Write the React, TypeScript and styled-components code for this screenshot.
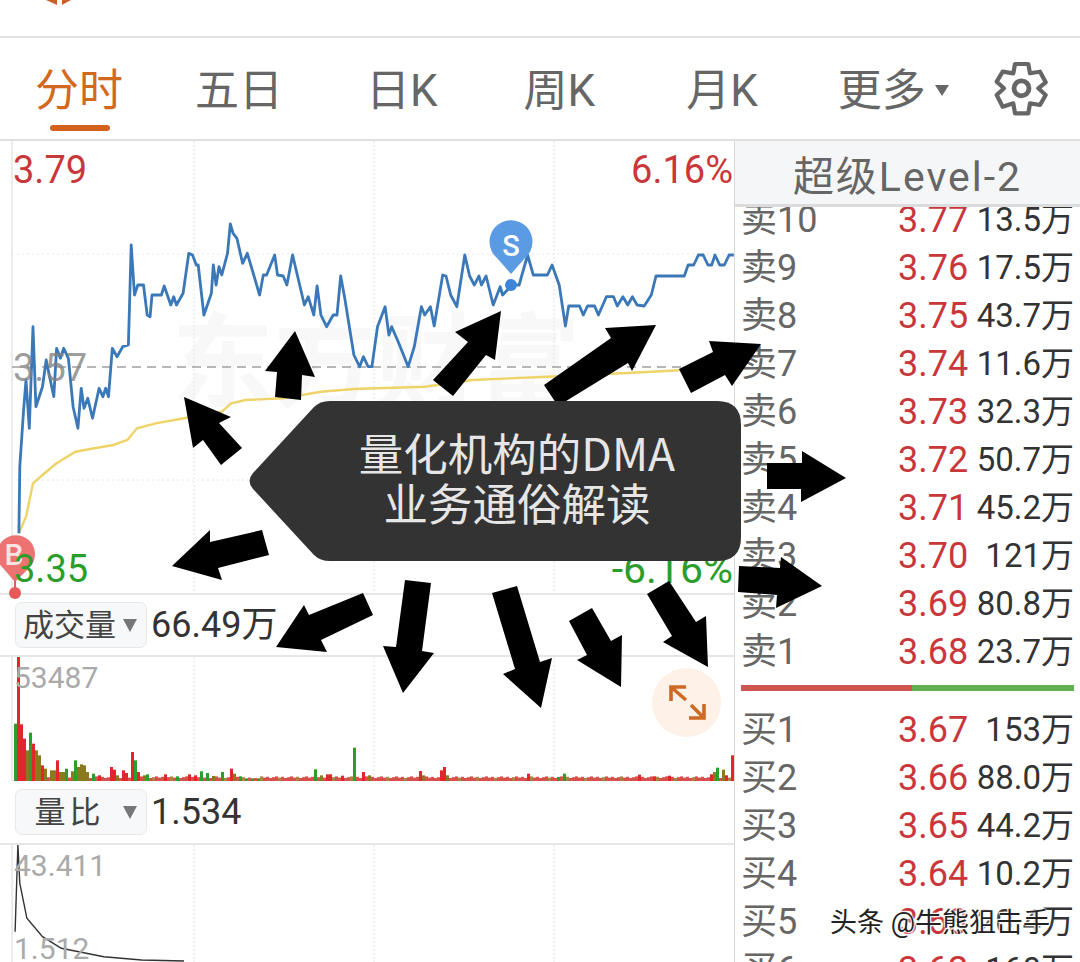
import React from 'react'
import styled, { createGlobalStyle } from 'styled-components'

const FONT = `Roboto, "Noto Sans CJK SC", sans-serif`

const GlobalStyle = createGlobalStyle`
	html, body {
		margin: 0;
		padding: 0;
		background: #fff;
	}
	body {
		width: 1080px;
		height: 962px;
		overflow: hidden;
		font-family: ${FONT};
	}
`

const Page = styled.div`
	position: relative;
	width: 1080px;
	height: 962px;
	overflow: hidden;
	background: #fff;
`

const TopStrip = styled.div`
	height: 36px;
	border-bottom: 2px solid #e2e2e2;

	svg {
		display: block;
	}
`

const TabBar = styled.div`
	display: flex;
	align-items: center;
	height: 101px;
	padding-left: 35px;
	border-bottom: 2px solid #dfdfdf;
`

const Tab = styled.div<{ $gap: number; $active?: boolean }>`
	position: relative;
	display: flex;
	align-items: center;
	margin-left: ${p => p.$gap}px;
	padding-top: 4px;
	font-size: 44px;
	line-height: 50px;
	white-space: nowrap;
	color: ${p => (p.$active ? '#d2691e' : '#666')};

	${p =>
		p.$active &&
		`&::after {
			content: '';
			position: absolute;
			left: 15px;
			right: 13px;
			bottom: -15px;
			height: 6px;
			border-radius: 3px;
			background: #d4621a;
		}`}
`

const TabCaret = styled.span`
	width: 0;
	height: 0;
	margin-left: 9px;
	border-left: 7px solid transparent;
	border-right: 7px solid transparent;
	border-top: 11px solid #666;
`

const GearSlot = styled.div`
	display: flex;
	margin: 3px 0 0 31px;
`

const Body = styled.div`
	display: flex;
	height: 823px;
`

const LeftColumn = styled.div`
	width: 734px;
	flex-shrink: 0;
	border-right: 1px solid #d8d8d8;
`

const ChartBox = styled.div<{ $h: number; $line?: boolean }>`
	position: relative;
	height: ${p => p.$h}px;
	${p => p.$line && 'border-bottom: 2px solid #e6e6e6;'}

	svg {
		position: relative;
		display: block;
		overflow: visible;
	}
`

const ChartLabel = styled.span<{ $top: number; $left?: number; $right?: number; $color: string; $size?: number }>`
	position: absolute;
	top: ${p => p.$top}px;
	${p => (p.$left !== undefined ? `left: ${p.$left}px;` : '')}
	${p => (p.$right !== undefined ? `right: ${p.$right}px;` : '')}
	font-size: ${p => p.$size ?? 38}px;
	line-height: 40px;
	color: ${p => p.$color};
`

const Watermark = styled.div`
	position: absolute;
	left: 172px;
	top: 168px;
	font-size: 102px;
	line-height: 110px;
	font-weight: 700;
	white-space: nowrap;
	color: #f8f8f8;
`

const IndicatorRow = styled.div<{ $h: number }>`
	display: flex;
	align-items: center;
	gap: 4px;
	box-sizing: border-box;
	height: ${p => p.$h}px;
	padding-left: 15px;
	border-bottom: 2px solid #e6e6e6;
`

const IndicatorButton = styled.div`
	display: flex;
	align-items: center;
	box-sizing: border-box;
	width: 132px;
	height: 46px;
	padding-right: 9px;
	border: 1px solid #e8e8e8;
	border-radius: 7px;
	background: #f7f8f9;
	color: #444;
`

const ButtonLabel = styled.span<{ $spacing?: number }>`
	flex: 1;
	margin-top: -6px;
	text-align: center;
	font-size: 31px;
	letter-spacing: ${p => p.$spacing ?? 0}px;
`

const ButtonCaret = styled.span`
	width: 0;
	height: 0;
	border-left: 7px solid transparent;
	border-right: 7px solid transparent;
	border-top: 13px solid #777;
`

const IndicatorValue = styled.span`
	font-size: 36px;
	line-height: 46px;
	color: #333;
`

const ExpandBadge = styled.div`
	position: absolute;
	left: 652px;
	top: 11px;
	display: flex;
	align-items: center;
	justify-content: center;
	width: 69px;
	height: 69px;
	border-radius: 50%;
	background: #fdf1e8;
`

const RightColumn = styled.div`
	flex: 1;
	min-width: 0;
	overflow: hidden;
`

const PanelHeader = styled.div`
	position: relative;
	z-index: 1;
	height: 63px;
	display: flex;
	align-items: center;
	justify-content: center;
	border-bottom: 3px solid #dcdcdc;
	background: #f5f6f7;
	font-size: 41px;
	letter-spacing: 2px;
	color: #666;
`

const QuoteList = styled.div`
	margin-top: -11px;
	padding: 0 6px;
`

const QuoteRow = styled.div`
	display: grid;
	grid-template-columns: 157px 1fr auto;
	height: 48px;
	line-height: 48px;
	font-size: 36px;
	white-space: nowrap;
`

const QuoteLabel = styled.span`
	color: #666;
`

const QuotePrice = styled.span`
	color: #c9373b;
	font-size: 36px;
`

const QuoteVolume = styled.span`
	color: #333;
	font-size: 33px;
`

const SpreadBar = styled.div`
	display: flex;
	height: 6px;
	margin: 9px 0 15px;

	&::before {
		content: '';
		width: 171px;
		background: #cf5550;
	}
	&::after {
		content: '';
		flex: 1;
		background: #62b04f;
	}
`

const ArrowLayer = styled.svg`
	position: absolute;
	left: 0;
	top: 0;
	pointer-events: none;
`

const Callout = styled.div`
	position: absolute;
	left: 248px;
	top: 401px;
	width: 493px;
	height: 160px;
	display: flex;
	flex-direction: column;
	align-items: center;
	justify-content: center;
	padding: 0 0 8px 45px;
	box-sizing: border-box;
	background: #333;
	clip-path: path('M5 72 L66 6 Q72 0 82 0 L469 0 Q493 0 493 24 L493 136 Q493 160 469 160 L82 160 Q72 160 66 154 L5 88 Q-2 80 5 72 Z');
	color: #e6e6e6;
	font-family: "Noto Sans CJK SC", sans-serif;
	font-size: 44.5px;
	line-height: 50px;
	font-weight: 400;
`

const SourceMark = styled.div`
	position: absolute;
	left: 830px;
	top: 906px;
	font-size: 27px;
	line-height: 34px;
	white-space: nowrap;
	color: #222;
	text-shadow: 0 0 2px #fff, 0 0 3px #fff, 1px 1px 1px #fff, -1px -1px 1px #fff;
`

const asks: [string, string, string][] = [
	['卖10', '3.77', '13.5万'],
	['卖9', '3.76', '17.5万'],
	['卖8', '3.75', '43.7万'],
	['卖7', '3.74', '11.6万'],
	['卖6', '3.73', '32.3万'],
	['卖5', '3.72', '50.7万'],
	['卖4', '3.71', '45.2万'],
	['卖3', '3.70', '121万'],
	['卖2', '3.69', '80.8万'],
	['卖1', '3.68', '23.7万'],
]

const bids: [string, string, string][] = [
	['买1', '3.67', '153万'],
	['买2', '3.66', '88.0万'],
	['买3', '3.65', '44.2万'],
	['买4', '3.64', '10.2万'],
	['买5', '3.63', '20.4万'],
	['买6', '3.62', '160万'],
]

// traced from the chart, x scaled by 2.119 and y by 3
const priceTrace = [
	[40, 1000], [42, 800], [50, 630], [55, 540], [62, 685], [70, 380], [76, 620], [90, 560], [98, 480], [105, 530], [114, 590],
	[120, 445], [128, 475], [135, 445], [145, 475], [155, 620], [165, 685], [172, 565], [178, 625], [186, 595], [196, 655],
	[210, 565], [218, 590], [224, 565], [230, 590], [238, 445], [248, 470], [260, 440], [272, 435], [278, 135], [285, 285],
	[292, 255], [304, 255], [312, 345], [318, 350], [322, 285], [342, 285], [348, 258], [362, 315], [368, 290], [374, 315],
	[388, 280], [400, 160], [408, 165], [416, 195], [420, 195], [432, 345], [448, 280], [452, 195], [458, 255], [464, 200],
	[470, 225], [482, 160], [488, 72], [494, 100], [502, 115], [514, 190], [524, 160], [550, 285], [558, 225], [565, 225],
	[582, 165], [588, 225], [600, 228], [608, 255], [620, 165], [630, 225], [645, 315], [653, 290], [665, 345], [672, 258],
	[680, 345], [692, 380], [706, 345], [714, 345], [722, 228], [730, 290], [750, 465], [762, 500], [770, 470], [780, 500],
	[788, 500], [800, 380], [816, 320], [824, 405], [830, 380], [845, 430], [865, 500], [878, 440], [893, 320], [900, 345],
	[912, 320], [920, 378], [938, 225], [945, 228], [955, 285], [968, 320], [985, 165], [995, 228], [1005, 255], [1015, 228],
	[1020, 255], [1030, 228], [1045, 315], [1060, 260], [1065, 285], [1085, 255], [1100, 255], [1118, 165], [1130, 225],
	[1160, 225], [1170, 195], [1185, 255], [1198, 378], [1205, 318], [1228, 318], [1236, 345], [1245, 318], [1260, 318],
	[1268, 345], [1285, 290], [1300, 290], [1308, 318], [1320, 290], [1330, 315], [1340, 290], [1350, 315], [1365, 318],
	[1380, 285], [1390, 228], [1398, 228], [1450, 228], [1458, 195], [1470, 195], [1480, 165], [1490, 165], [1500, 195],
	[1508, 195], [1515, 165], [1525, 195], [1535, 195], [1545, 165], [1555, 165],
]

const avgTrace = [
	[40, 1000], [55, 950], [70, 850], [90, 825], [120, 790], [160, 755], [200, 745], [240, 735], [270, 720], [290, 685],
	[330, 670], [390, 655], [470, 635], [490, 610], [520, 600], [600, 595], [680, 575], [750, 567], [900, 560], [1000, 540],
	[1160, 530], [1340, 518], [1450, 510],
]

const ratioTrace = [
	[32, 1025], [38, 765], [42, 880], [57, 985], [90, 1040], [130, 1075], [220, 1100], [300, 1110], [390, 1113],
]

const toPoints = (trace: number[][], baseY: number) =>
	trace.map(([x, y]) => `${(x / 2.119).toFixed(1)},${(baseY + y / 3).toFixed(1)}`).join(' ')

const R = '#e2262c'
const G = '#2c9e2c'
const O = '#8a7a1e'

// [zoomed x, zoomed top, colour]
const volumeSpikes: [number, number, string][] = [
	[32, 400, G], [38, 200, R], [44, 402, R], [50, 445, R], [56, 480, O], [63, 427, G], [68, 460, R], [74, 480, O], [80, 495, O],
	[88, 525, R], [96, 535, O], [104, 540, O], [112, 540, O], [120, 510, R], [128, 545, O], [134, 545, O], [140, 535, G],
	[148, 543, O], [158, 510, G], [164, 530, O], [172, 522, O], [178, 525, O], [184, 545, O], [192, 550, G], [205, 555, R],
	[232, 530, R], [240, 538, R], [248, 555, O], [258, 540, R], [268, 548, R], [278, 485, R], [285, 510, G], [292, 545, R],
	[300, 555, O], [310, 552, G], [348, 552, R], [374, 558, G], [398, 552, R], [408, 555, R], [424, 543, G], [438, 548, G],
	[452, 557, O], [468, 545, G], [487, 535, R], [495, 550, O], [505, 558, G], [520, 564, G], [530, 564, G], [545, 564, G],
	[665, 537, G], [680, 555, O], [688, 552, R], [700, 552, R], [722, 556, R], [747, 472, G], [767, 545, R], [780, 555, O],
	[887, 542, R], [895, 555, O], [930, 540, R], [937, 530, R], [945, 555, O], [1115, 550, R], [1180, 560, G], [1190, 550, G],
	[1350, 553, R], [1385, 558, R], [1415, 556, R], [1505, 552, R], [1512, 545, O], [1520, 532, G], [1528, 538, O], [1536, 555, R],
	[1552, 495, R],
]

const volumeBars = () => {
	const bars: { x: number; h: number; c: string }[] = []
	for (let i = 0; i < 240; i++) {
		bars.push({ x: 14 + i * 3, h: 3 + ((i * 7) % 5) * 0.4, c: i % 6 === 4 ? '#a8843c' : '#d8504c' })
	}
	volumeSpikes.forEach(([z, top, c]) => {
		const i = Math.round((z / 2.119 - 14) / 3)
		if (bars[i]) bars[i] = { x: 14 + i * 3, h: (572 - top) / 3, c }
	})
	return bars
}

// black arrows drawn over the whole screenshot
const arrows = [
	'295,331 315,377 302,375 301,400 275,397 277,372 265,371',
	'501,311 495,360 486,355 453,396 433,380 468,342 455,332',
	'656,325 632,371 628,363 558,406 544,385 611,338 605,328',
	'761,344 732,386 725,375 691,393 679,369 713,352 709,341',
	'184,397 231,417 219,423 242,448 221,465 203,440 193,448',
	'172,566 210,530 210,542 262,530 269,555 218,568 222,580',
	'276,647 304,605 309,615 363,593 373,615 321,640 327,652',
	'405,580 431,583 422,651 434,653 403,693 383,646 396,647',
	'492,593 517,586 540,662 552,658 541,708 503,674 515,669',
	'569,621 592,608 611,641 622,635 621,687 577,660 587,655',
	'647,594 669,581 696,622 706,616 708,667 663,642 672,636',
	'767,463 802,463 802,451 846,478 801,502 801,489 767,489',
	'739,566 780,568 781,557 822,586 776,608 777,595 738,592',
]

const GridLines: React.FC<{ y1: number; y2: number }> = ({ y1, y2 }) => (
	<g stroke="#e2e2e2" strokeWidth="1">
		<line x1="12" y1={y1} x2="12" y2={y2} stroke="#d8d8d8" />
		{[194, 374, 554].map(x => (
			<line key={x} x1={x} y1={y1} x2={x} y2={y2} strokeDasharray="2 2" />
		))}
	</g>
)

const GearIcon: React.FC = () => (
	<svg width="80" height="80" viewBox="0 0 80 80" fill="none" stroke="#666" strokeWidth="4.2" strokeLinejoin="round">
		<path d="M35 14 H48.300 L50 23.300 L60 21.700 L65.700 32.300 L58.300 38.300 L65.700 45 L60 55 L50 53.300 L48.300 63.300 H35 L33.300 53.300 L22.700 56.700 L16.700 45 L24 38.300 L16.700 31.700 L22.700 21.700 L33.300 23.300 Z" />
		<circle cx="41.500" cy="38.300" r="7.500" strokeWidth="4.800" />
	</svg>
)

const PriceChart: React.FC = () => (
	<svg width="734" height="452" viewBox="0 141 734 452">
		<GridLines y1={141} y2={593} />
		<g stroke="#e8e8e8" strokeDasharray="2 3">
			<line x1="12" y1="254" x2="734" y2="254" />
			<line x1="12" y1="480" x2="734" y2="480" />
		</g>
		<line x1="12" y1="367" x2="734" y2="367" stroke="#a0a0a0" strokeWidth="1.5" strokeDasharray="9 6" />
		<polyline points={toPoints(avgTrace, 200)} fill="none" stroke="#eed468" strokeWidth="2.400" />
		<polyline points={toPoints(priceTrace, 200)} fill="none" stroke="#3a78b8" strokeWidth="2.800" strokeLinejoin="round" />
		<circle cx="511" cy="285" r="6" fill="#3d85d8" />
		<path d="M511 274 L497 258 A21.500 21.500 0 1 1 525 258 Z" fill="#5a9be4" />
		<text x="511" y="256" textAnchor="middle" fontSize="29" fontWeight="500" fill="#fff" fontFamily="Roboto, sans-serif">S</text>
		<line x1="15" y1="575" x2="15" y2="592" stroke="#e85a5a" strokeWidth="2" />
		<circle cx="15" cy="593" r="6" fill="#e85a5a" />
		<path d="M15 582 L3 568 A19 19 0 1 1 29 568 Z" fill="#ec6c6c" opacity="0.95" />
		<text x="14" y="565" textAnchor="middle" fontSize="30" fontWeight="500" fill="#fbe3e3" fontFamily="Roboto, sans-serif">B</text>
	</svg>
)

const VolumeChart: React.FC = () => (
	<svg width="734" height="124" viewBox="0 657 734 124">
		<GridLines y1={657} y2={781} />
		{volumeBars().map(b => (
			<rect key={b.x} x={b.x} y={781 - b.h} width="3" height={b.h} fill={b.c} />
		))}
	</svg>
)

const RatioChart: React.FC = () => (
	<svg width="734" height="117" viewBox="0 845 734 117">
		<GridLines y1={845} y2={962} />
		<polyline points={toPoints(ratioTrace, 590)} fill="none" stroke="#333" strokeWidth="1.4" />
	</svg>
)

const Quote: React.FC<{ row: [string, string, string] }> = ({ row }) => (
	<QuoteRow>
		<QuoteLabel>{row[0]}</QuoteLabel>
		<QuotePrice>{row[1]}</QuotePrice>
		<QuoteVolume>{row[2]}</QuoteVolume>
	</QuoteRow>
)

const App: React.FC = () => {
	return (
		<Page>
			<GlobalStyle />
			<TopStrip>
				<svg width="80" height="6" viewBox="0 0 80 6">
					<path d="M46 0 H57 V5 Z M62 0 H71 L62 5 Z" fill="#c8622a" />
				</svg>
			</TopStrip>
			<TabBar>
				<Tab $gap={0} $active>分时</Tab>
				<Tab $gap={72}>五日</Tab>
				<Tab $gap={83}>日K</Tab>
				<Tab $gap={86}>周K</Tab>
				<Tab $gap={91}>月K</Tab>
				<Tab $gap={80}>
					更多
					<TabCaret />
				</Tab>
				<GearSlot>
					<GearIcon />
				</GearSlot>
			</TabBar>
			<Body>
				<LeftColumn>
					<ChartBox $h={452} $line>
						<Watermark>东方财富</Watermark>
						<PriceChart />
						<ChartLabel $top={9} $left={13} $color="#c9373b">3.79</ChartLabel>
						<ChartLabel $top={9} $right={1} $color="#c9373b">6.16%</ChartLabel>
						<ChartLabel $top={207} $left={13} $color="rgba(130,130,130,0.8)">3.57</ChartLabel>
						<ChartLabel $top={408} $left={14} $color="#2a9d2a">3.35</ChartLabel>
						<ChartLabel $top={408} $right={1} $color="#2a9d2a" $size={41}>-6.16%</ChartLabel>
					</ChartBox>
					<IndicatorRow $h={62}>
						<IndicatorButton>
							<ButtonLabel>成交量</ButtonLabel>
							<ButtonCaret />
						</IndicatorButton>
						<IndicatorValue>66.49万</IndicatorValue>
					</IndicatorRow>
					<ChartBox $h={124}>
						<VolumeChart />
						<ChartLabel $top={1} $left={14} $color="#aaa" $size={30}>53487</ChartLabel>
						<ExpandBadge>
							<svg width="36" height="36" viewBox="0 0 36 36" fill="none" stroke="#cf6a25" strokeWidth="3.600">
								<path d="M17 2 H2 V16 M2 2 L17 15" />
								<path d="M20 33 H35 V19 M35 33 L22 20" />
							</svg>
						</ExpandBadge>
					</ChartBox>
					<IndicatorRow $h={64}>
						<IndicatorButton>
							<ButtonLabel $spacing={4}>量比</ButtonLabel>
							<ButtonCaret />
						</IndicatorButton>
						<IndicatorValue>1.534</IndicatorValue>
					</IndicatorRow>
					<ChartBox $h={117}>
						<RatioChart />
						<ChartLabel $top={1} $left={14} $color="#aaa" $size={30}>43.411</ChartLabel>
						<ChartLabel $top={84} $left={14} $color="#aaa" $size={30}>1.512</ChartLabel>
					</ChartBox>
				</LeftColumn>
				<RightColumn>
					<PanelHeader>超级Level-2</PanelHeader>
					<QuoteList>
						{asks.map(row => (
							<Quote key={row[0]} row={row} />
						))}
						<SpreadBar />
						{bids.map(row => (
							<Quote key={row[0]} row={row} />
						))}
					</QuoteList>
				</RightColumn>
			</Body>
			<ArrowLayer width="1080" height="962" viewBox="0 0 1080 962">
				{arrows.map(points => (
					<polygon key={points} points={points} fill="#000" />
				))}
			</ArrowLayer>
			<Callout>
				<div>量化机构的DMA</div>
				<div>业务通俗解读</div>
			</Callout>
			<SourceMark>头条 @牛熊狙击手</SourceMark>
		</Page>
	)
}

export default App
